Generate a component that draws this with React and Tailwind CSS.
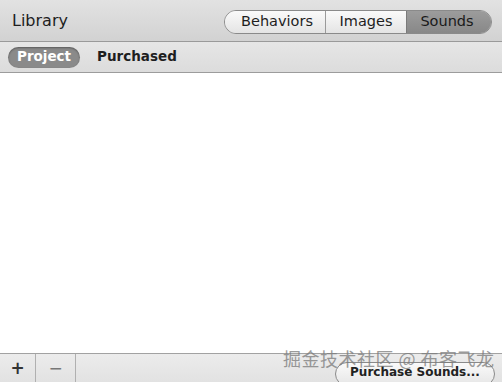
export default function App() {
  return (
    <div
      className="relative flex h-[382px] w-[502px] flex-col overflow-hidden bg-white text-[#1e1e1e]"
      style={{ fontFamily: '"DejaVu Sans", "Liberation Sans", sans-serif' }}
    >
      {/* title bar */}
      <div className="flex h-[42px] shrink-0 items-center justify-between border-b border-[#9a9a9a] bg-gradient-to-b from-[#e2e2e2] to-[#d2d2d2] pl-[12px] pr-[10px]">
        <span className="text-[16px] leading-none">Library</span>
        <div className="mt-[2px] flex h-[24px] overflow-hidden rounded-full border border-[#8a8a8a] text-[14.5px] leading-none">
          <div className="flex w-[101px] items-center justify-center border-r border-[#9a9a9a] bg-gradient-to-b from-[#fafafa] to-[#e4e4e4] pl-[4px]">
            Behaviors
          </div>
          <div className="flex w-[81px] items-center justify-center border-r border-[#7a7a7a] bg-gradient-to-b from-[#fafafa] to-[#e4e4e4]">
            Images
          </div>
          <div className="flex w-[84px] items-center justify-center bg-gradient-to-b from-[#9c9c9c] to-[#888888] pr-[4px] text-[#1a1a1a]">
            Sounds
          </div>
        </div>
      </div>

      {/* scope bar */}
      <div className="flex h-[31px] shrink-0 items-center border-b border-[#9c9c9c] bg-gradient-to-b from-[#e6e6e6] to-[#dcdcdc] pl-[8px] text-[13.5px] font-bold leading-none">
        <span className="flex h-[21px] items-center rounded-full bg-[#8a8a8a] px-[9px] text-white shadow-[inset_0_1px_2px_rgba(0,0,0,0.35)]">
          Project
        </span>
        <span className="ml-[17px]">Purchased</span>
      </div>

      {/* list */}
      <div className="flex-1 bg-white" />

      {/* bottom bar */}
      <div className="flex h-[29px] shrink-0 border-t border-[#a2a2a2] bg-gradient-to-b from-[#ececec] to-[#e2e2e2]">
        <div className="flex w-[36px] items-center justify-center border-r border-[#b0b0b0] text-[17px] font-bold leading-none text-[#333]">
          +
        </div>
        <div className="flex w-[40px] items-center justify-center border-r border-[#b0b0b0] text-[17px] leading-none text-[#777]">
          −
        </div>
        <div className="ml-auto mr-[7px] pt-[8px]">
          <div className="flex h-[24px] w-[160px] items-start justify-center rounded-full border border-[#8a8a8a] bg-gradient-to-b from-[#fafafa] to-[#e6e6e6] pt-[3px] text-[12px] font-bold leading-none text-[#222]">
            Purchase Sounds...
          </div>
        </div>
      </div>

      {/* watermark */}
      <div
        className="pointer-events-none absolute left-[283px] top-[349px] whitespace-nowrap text-[18px] leading-none tracking-[0.5px] text-[#7a7a7a] opacity-75"
        style={{ fontFamily: '"Noto Sans CJK SC", sans-serif' }}
      >
        掘金技术社区 @ 布客飞龙
      </div>
    </div>
  );
}
